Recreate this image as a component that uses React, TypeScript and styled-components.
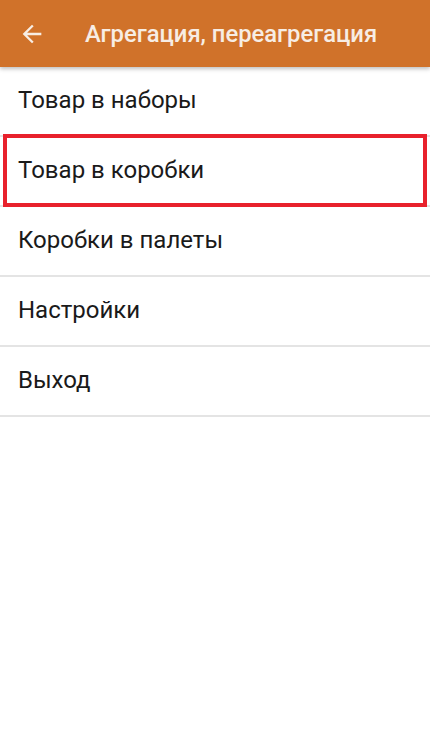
import React from 'react';
import { createGlobalStyle, styled } from 'styled-components';

const GlobalStyle = createGlobalStyle`
  html, body {
    margin: 0;
    padding: 0;
    background: #fff;
  }
  body {
    font-family: Roboto, "Noto Sans", "Liberation Sans", sans-serif;
  }
`;

const items = [
  { title: 'Товар в наборы' },
  { title: 'Товар в коробки', marked: true },
  { title: 'Коробки в палеты' },
  { title: 'Настройки' },
  { title: 'Выход' },
];

export default function App() {
  return (
    <Screen>
      <GlobalStyle />
      <Toolbar>
        <BackButton aria-label="Назад">
          <svg width="28" height="28" viewBox="0 0 24 24">
            <path fill="currentColor" d="M20 11H7.83l5.59-5.59L12 4l-8 8 8 8 1.41-1.41L7.83 13H20v-2z" />
          </svg>
        </BackButton>
        <Title>Агрегация, переагрегация</Title>
      </Toolbar>
      <Menu>
        {items.map((item) => (
          <MenuRow key={item.title}>
            {item.title}
            {item.marked && <Highlight />}
          </MenuRow>
        ))}
      </Menu>
    </Screen>
  );
}

const Screen = styled.div`
  width: 430px;
  min-height: 739px;
  background: #fff;
  display: flex;
  flex-direction: column;
`;

const Toolbar = styled.header`
  height: 67px;
  background: #d0722a;
  display: flex;
  align-items: center;
  box-shadow: 0 2px 4px rgba(0, 0, 0, 0.25);
  position: relative;
  z-index: 1;
`;

const BackButton = styled.div`
  width: 28px;
  height: 28px;
  margin-left: 18px;
  color: #f7ede4;
  display: flex;
  align-items: center;
  justify-content: center;
`;

const Title = styled.h1`
  margin: 0 0 0 39px;
  font-size: 23.8px;
  font-weight: 500;
  color: #f7ede4;
  white-space: nowrap;
`;

const Menu = styled.div`
  display: flex;
  flex-direction: column;
`;

const MenuRow = styled.div`
  position: relative;
  box-sizing: border-box;
  height: 70px;
  padding: 0 18px 3px;
  display: flex;
  align-items: center;
  font-size: 24px;
  color: #1a1a1a;
  border-bottom: 2px solid #e4e4e4;
`;

const Highlight = styled.span`
  position: absolute;
  top: -3px;
  bottom: -2px;
  left: 3px;
  right: 3px;
  border: 4px solid #e8212c;
  pointer-events: none;
`;
